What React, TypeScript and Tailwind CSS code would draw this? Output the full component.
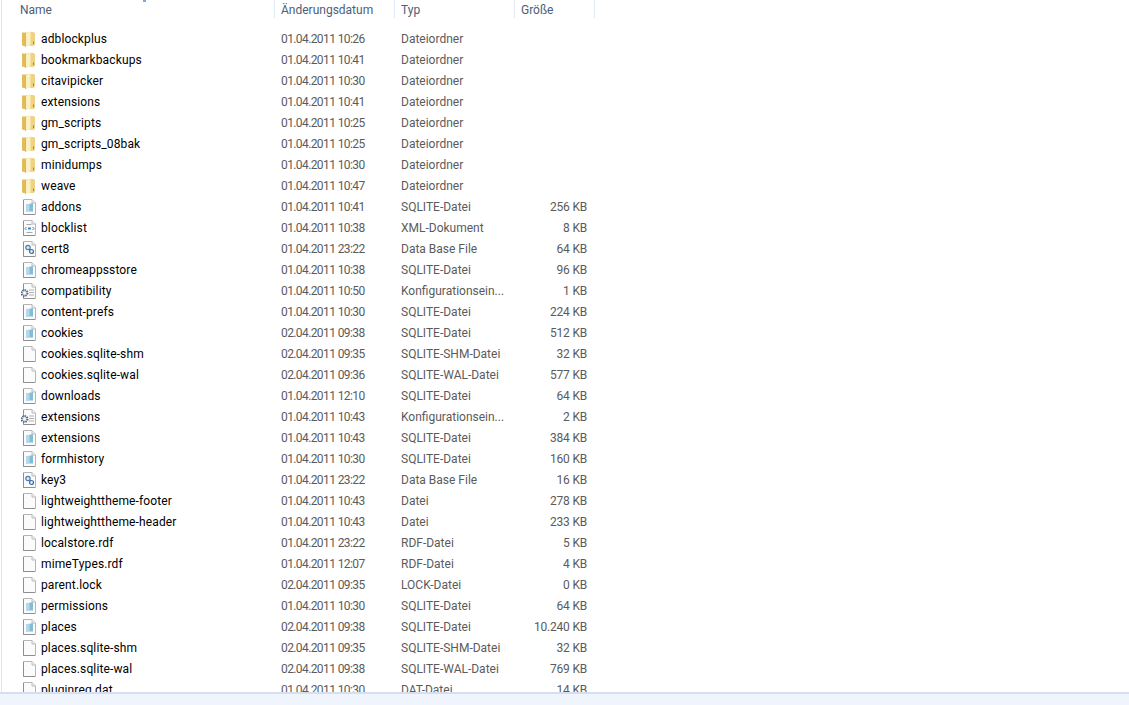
type Kind = 'folder' | 'db' | 'xml' | 'cert' | 'config' | 'blank';

const files: [string, string, string, string, Kind][] = [
  ['adblockplus', '01.04.2011 10:26', 'Dateiordner', '', 'folder'],
  ['bookmarkbackups', '01.04.2011 10:41', 'Dateiordner', '', 'folder'],
  ['citavipicker', '01.04.2011 10:30', 'Dateiordner', '', 'folder'],
  ['extensions', '01.04.2011 10:41', 'Dateiordner', '', 'folder'],
  ['gm_scripts', '01.04.2011 10:25', 'Dateiordner', '', 'folder'],
  ['gm_scripts_08bak', '01.04.2011 10:25', 'Dateiordner', '', 'folder'],
  ['minidumps', '01.04.2011 10:30', 'Dateiordner', '', 'folder'],
  ['weave', '01.04.2011 10:47', 'Dateiordner', '', 'folder'],
  ['addons', '01.04.2011 10:41', 'SQLITE-Datei', '256 KB', 'db'],
  ['blocklist', '01.04.2011 10:38', 'XML-Dokument', '8 KB', 'xml'],
  ['cert8', '01.04.2011 23:22', 'Data Base File', '64 KB', 'cert'],
  ['chromeappsstore', '01.04.2011 10:38', 'SQLITE-Datei', '96 KB', 'db'],
  ['compatibility', '01.04.2011 10:50', 'Konfigurationsein...', '1 KB', 'config'],
  ['content-prefs', '01.04.2011 10:30', 'SQLITE-Datei', '224 KB', 'db'],
  ['cookies', '02.04.2011 09:38', 'SQLITE-Datei', '512 KB', 'db'],
  ['cookies.sqlite-shm', '02.04.2011 09:35', 'SQLITE-SHM-Datei', '32 KB', 'blank'],
  ['cookies.sqlite-wal', '02.04.2011 09:36', 'SQLITE-WAL-Datei', '577 KB', 'blank'],
  ['downloads', '01.04.2011 12:10', 'SQLITE-Datei', '64 KB', 'db'],
  ['extensions', '01.04.2011 10:43', 'Konfigurationsein...', '2 KB', 'config'],
  ['extensions', '01.04.2011 10:43', 'SQLITE-Datei', '384 KB', 'db'],
  ['formhistory', '01.04.2011 10:30', 'SQLITE-Datei', '160 KB', 'db'],
  ['key3', '01.04.2011 23:22', 'Data Base File', '16 KB', 'cert'],
  ['lightweighttheme-footer', '01.04.2011 10:43', 'Datei', '278 KB', 'blank'],
  ['lightweighttheme-header', '01.04.2011 10:43', 'Datei', '233 KB', 'blank'],
  ['localstore.rdf', '01.04.2011 23:22', 'RDF-Datei', '5 KB', 'blank'],
  ['mimeTypes.rdf', '01.04.2011 12:07', 'RDF-Datei', '4 KB', 'blank'],
  ['parent.lock', '02.04.2011 09:35', 'LOCK-Datei', '0 KB', 'blank'],
  ['permissions', '01.04.2011 10:30', 'SQLITE-Datei', '64 KB', 'db'],
  ['places', '02.04.2011 09:38', 'SQLITE-Datei', '10.240 KB', 'db'],
  ['places.sqlite-shm', '02.04.2011 09:35', 'SQLITE-SHM-Datei', '32 KB', 'blank'],
  ['places.sqlite-wal', '02.04.2011 09:38', 'SQLITE-WAL-Datei', '769 KB', 'blank'],
  ['pluginreg.dat', '01.04.2011 10:30', 'DAT-Datei', '14 KB', 'blank'],
];

function FileIcon({ kind }: { kind: Kind }) {
  if (kind === 'folder') {
    return (
      <svg width="16" height="18" viewBox="0 0 16 18">
        <path d="M1 2.5 H5 V16 H2 L1 15 Z" fill="#e3bd5c" />
        <path d="M5 2 H12.5 L14 3 V15 L12.5 16 H5 Z" fill="#eed386" />
        <path d="M4.5 3 L9.5 1 V15.5 L4.5 17 Z" fill="#fbf0bf" />
        <path d="M4.5 3 V17" stroke="#cfa748" strokeWidth="0.7" />
        <path d="M12.5 11.5 V14" stroke="#3f9ad0" strokeWidth="1" />
      </svg>
    );
  }
  return (
    <svg width="16" height="16" viewBox="0 0 16 16">
      <path d="M2.5 0.5 H11 L14.5 4 V15.5 H2.5 Z" fill="#fbfbfb" stroke="#b5b5b5" />
      <path d="M11 0.5 V4 H14.5" fill="#efefef" stroke="#bdbdbd" />
      <path d="M2.5 1 V15.5 H14" fill="none" stroke="#8f8f8f" />
      {kind === 'db' && (
        <>
          <path d="M5 5.5 L12 4 V12.5 H5 Z" fill="#84bcd6" />
          <path d="M5 5.5 L8.5 4.8 V12.5 H5 Z" fill="#b5d9e8" />
        </>
      )}
      {kind === 'xml' && (
        <>
          <path d="M5.5 7 L4 8.5 L5.5 10 M11.5 7 L13 8.5 L11.5 10" fill="none" stroke="#4a7fb5" />
          <path d="M7 8.5 H10" stroke="#2f88d0" strokeWidth="2" />
          <path d="M5.5 4.5 H10.5 M5.5 12.5 H11.5" stroke="#a9a9a9" />
        </>
      )}
      {kind === 'cert' && (
        <>
          <circle cx="7" cy="6.5" r="2.2" fill="#dcebf7" stroke="#4a7fb5" strokeWidth="1.2" />
          <circle cx="10.5" cy="10.5" r="2" fill="#dcebf7" stroke="#3f6fa3" strokeWidth="1.2" />
          <path d="M8.5 8 L9.5 9.2" stroke="#3f6fa3" strokeWidth="1.2" />
        </>
      )}
      {kind === 'config' && (
        <>
          <path d="M8 7 H13 M8 9.5 H13 M8 12 H13" stroke="#b0b0b0" />
          <circle cx="3.5" cy="10" r="3" fill="#dbe3ea" stroke="#4f647c" strokeWidth="2" strokeDasharray="1.4 0.9" />
          <circle cx="3.5" cy="10" r="1" fill="#ffffff" />
        </>
      )}
    </svg>
  );
}

function HeaderCell({ label, width }: { label: string; width: string }) {
  return (
    <div className={`${width} h-[18px] pl-[6px] pt-[1px] flex items-center border-r border-[#dfe9f5] text-[#4c607a]`}>
      {label}
    </div>
  );
}

export default function App() {
  return (
    <div className="relative h-[705px] flex flex-col overflow-hidden bg-white text-[12px] font-['Roboto',sans-serif]">
      {/* Clipped sort arrow at the very top */}
      <div className="absolute left-[143px] top-0 w-[3px] h-[2px] bg-[#7fa8d0]" />

      <div className="flex-1 min-h-0 overflow-hidden ml-[1px] border-l border-[#dbe6f4]">
        {/* Column headers */}
        <div className="flex pl-[12px]">
          <HeaderCell label="Name" width="w-[261px]" />
          <HeaderCell label="Änderungsdatum" width="w-[120px]" />
          <HeaderCell label="Typ" width="w-[120px]" />
          <HeaderCell label="Größe" width="w-[80px]" />
        </div>

        {/* File rows */}
        <div className="pt-[10px]">
          {files.map(([name, date, type, size, kind], i) => (
            <div key={i} className="flex h-[21px] items-center pl-[12px]">
              <div className="w-[261px] flex items-center gap-[4px] pl-[7px] text-black">
                <span className="w-[16px] h-[16px] shrink-0 flex items-center">
                  <FileIcon kind={kind} />
                </span>
                <span className="whitespace-nowrap tracking-[0.13px]">{name}</span>
              </div>
              <div className="w-[120px] pl-[6px] text-[#5b5b5b] whitespace-nowrap tracking-[-0.6px]">{date}</div>
              <div className="w-[120px] pl-[6px] text-[#5b5b5b] whitespace-nowrap">{type}</div>
              <div className="w-[80px] pr-[8px] text-right text-[#5b5b5b] whitespace-nowrap tracking-[-0.2px]">{size}</div>
            </div>
          ))}
        </div>
      </div>

      {/* Bottom edge of the window */}
      <div className="h-[13px] shrink-0 bg-[#f0f4fd] border-t-2 border-[#d5dfee]" />
    </div>
  );
}
